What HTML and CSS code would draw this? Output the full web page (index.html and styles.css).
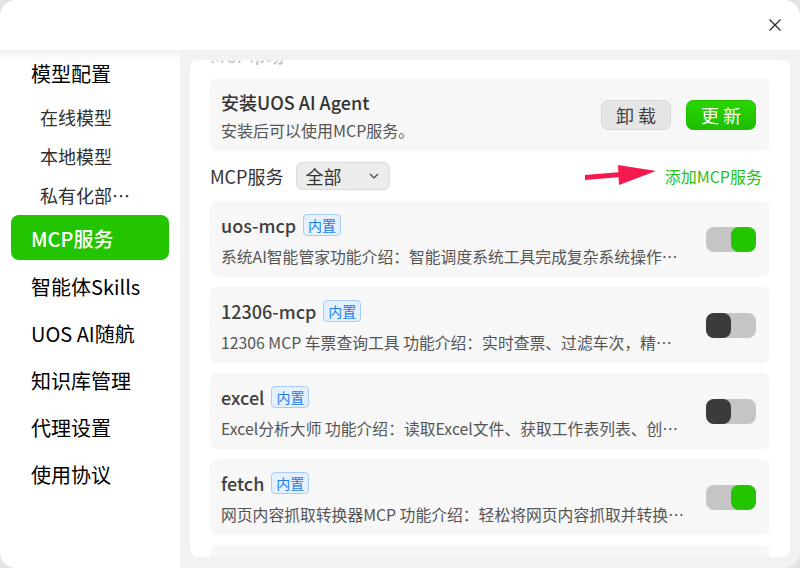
FILE: index.html
```html
<!DOCTYPE html>
<html lang="zh-CN">
<head>
<meta charset="utf-8">
<title>UOS AI 设置</title>
<link rel="stylesheet" href="styles.css">
</head>
<body>
<div class="window">
  <header class="titlebar">
    <button class="close" aria-label="关闭">
      <svg width="14" height="14" viewBox="0 0 14 14"><path d="M1.5 1.5 L12.5 12.5 M12.5 1.5 L1.5 12.5" stroke="#2b2b2b" stroke-width="1.3" fill="none"/></svg>
    </button>
  </header>
  <div class="main">
    <nav class="sidebar">
      <div class="nav-head">模型配置</div>
      <div class="nav-sub">在线模型</div>
      <div class="nav-sub">本地模型</div>
      <div class="nav-sub">私有化部…</div>
      <div class="nav-item active">MCP服务</div>
      <div class="nav-rest">
        <div class="nav-item">智能体Skills</div>
        <div class="nav-item">UOS AI随航</div>
        <div class="nav-item">知识库管理</div>
        <div class="nav-item">代理设置</div>
        <div class="nav-item">使用协议</div>
      </div>
    </nav>
    <div class="content-wrap">
      <section class="panel">
        <div class="scroll">
          <h3 class="section-title">MCP市场</h3>
          <div class="card agent">
            <div class="card-text">
              <div class="agent-title">安装UOS AI Agent</div>
              <div class="agent-sub">安装后可以使用MCP服务。</div>
            </div>
            <div class="agent-actions">
              <button class="btn btn-grey">卸 载</button>
              <button class="btn btn-green">更 新</button>
            </div>
          </div>
          <div class="mcp-bar">
            <span class="bar-label">MCP服务</span>
            <div class="select">
              <span>全部</span>
              <svg width="10" height="6" viewBox="0 0 10 6"><path d="M1 1 L5 5 L9 1" stroke="#444" stroke-width="1.2" fill="none"/></svg>
            </div>
            <span class="spacer"></span>
            <svg class="arrow" width="76" height="26" viewBox="0 0 76 26">
              <polygon points="2,13 38,10 38,15 2,18" fill="#f51a4e"/>
              <polygon points="35,3 73,9 36,23" fill="#f51a4e"/>
            </svg>
            <a class="add-link">添加MCP服务</a>
          </div>
          <div class="card mcp">
            <div class="card-text">
              <div class="mcp-title"><span>uos-mcp</span><span class="tag">内置</span></div>
              <div class="mcp-desc">系统AI智能管家功能介绍：智能调度系统工具完成复杂系统操作…</div>
            </div>
            <div class="toggle on"><span class="knob"></span></div>
          </div>
          <div class="card mcp">
            <div class="card-text">
              <div class="mcp-title"><span>12306-mcp</span><span class="tag">内置</span></div>
              <div class="mcp-desc">12306 MCP 车票查询工具 功能介绍：实时查票、过滤车次，精…</div>
            </div>
            <div class="toggle off"><span class="knob"></span></div>
          </div>
          <div class="card mcp">
            <div class="card-text">
              <div class="mcp-title"><span>excel</span><span class="tag">内置</span></div>
              <div class="mcp-desc">Excel分析大师 功能介绍：读取Excel文件、获取工作表列表、创…</div>
            </div>
            <div class="toggle off"><span class="knob"></span></div>
          </div>
          <div class="card mcp">
            <div class="card-text">
              <div class="mcp-title"><span>fetch</span><span class="tag">内置</span></div>
              <div class="mcp-desc">网页内容抓取转换器MCP 功能介绍：轻松将网页内容抓取并转换…</div>
            </div>
            <div class="toggle on"><span class="knob"></span></div>
          </div>
          <div class="card mcp"></div>
        </div>
      </section>
    </div>
  </div>
</div>
</body>
</html>
```

FILE: styles.css
```css
* { box-sizing: border-box; }

html, body {
  margin: 0;
  padding: 0;
  background: #e4e4e4;
}

body {
  font-family: "Noto Sans CJK SC", "Noto Sans", sans-serif;
  color: #333;
}

.window {
  width: 800px;
  height: 568px;
  border-radius: 16px;
  overflow: hidden;
  background: #f2f2f2;
  display: flex;
  flex-direction: column;
}

.titlebar {
  height: 50px;
  flex: none;
  background: #fff;
  display: flex;
  justify-content: flex-end;
  align-items: center;
  padding-right: 13px;
}

.close {
  width: 24px;
  height: 24px;
  border: 0;
  padding: 0;
  background: transparent;
  display: flex;
  align-items: center;
  justify-content: center;
}

.main {
  flex: 1;
  display: flex;
  min-height: 0;
}

/* sidebar */
.sidebar {
  width: 180px;
  flex: none;
  background: linear-gradient(#f2f2f2, #ffffff 12px);
  color: #000;
}

.nav-head {
  height: 48px;
  line-height: 48px;
  padding-left: 31px;
  font-size: 20px;
  font-weight: 400;
}

.nav-sub {
  height: 39px;
  line-height: 39px;
  padding-left: 40px;
  font-size: 18px;
  color: #303030;
}

.nav-item {
  height: 47px;
  line-height: 47px;
  padding-left: 31px;
  font-size: 20px;
  font-weight: 400;
}

.nav-item.active {
  margin: 0 11px;
  height: 45px;
  line-height: 47px;
  padding-left: 20px;
  border-radius: 8px;
  background: #23c400;
  color: #fff;
  font-weight: 500;
}

.nav-rest {
  padding-top: 3px;
}

/* content */
.content-wrap {
  flex: 1;
  display: flex;
  padding: 10px 10px 11px 10px;
  min-width: 0;
}

.panel {
  flex: 1;
  position: relative;
  background: #fff;
  border-radius: 8px;
  overflow: hidden;
  padding: 0 20px;
}

.panel::before {
  content: "";
  position: absolute;
  left: 0;
  right: 0;
  top: 0;
  height: 14px;
  background: linear-gradient(rgba(255, 255, 255, 0.85), rgba(255, 255, 255, 0));
  z-index: 1;
}

.scroll {
  margin-top: -16px;
}

.section-title {
  margin: 0 0 12px 0;
  font-size: 18px;
  line-height: 22px;
  font-weight: 500;
  color: #333;
}

.card {
  background: #f7f7f7;
  border-radius: 8px;
  display: flex;
  align-items: center;
}

.card-text {
  flex: 1;
  min-width: 0;
}

.agent {
  padding: 12px 14px 11px 11px;
}

.agent-title {
  font-size: 18px;
  line-height: 25px;
  font-weight: 500;
  color: #333;
}

.agent-sub {
  margin-top: 5px;
  font-size: 16px;
  line-height: 20px;
  color: #555;
}

.agent-actions {
  display: flex;
  gap: 15px;
}

.btn {
  width: 70px;
  height: 30px;
  border-radius: 7px;
  font-family: inherit;
  font-size: 18px;
  line-height: 28px;
  padding: 0;
}

.btn-grey {
  background: #e6e6e6;
  border: 1px solid #d6d6d6;
  color: #404040;
}

.btn-green {
  background: linear-gradient(#2ad600, #1fbd00);
  border: 1px solid #22c000;
  color: #fff;
}

.mcp-bar {
  height: 28px;
  margin: 11px 8px 11px 0;
  display: flex;
  align-items: center;
}

.bar-label {
  font-size: 18px;
  color: #333;
}

.select {
  margin-left: 12px;
  width: 94px;
  height: 28px;
  border-radius: 6px;
  background: #ececec;
  border: 1px solid #dcdcdc;
  display: flex;
  align-items: center;
  justify-content: space-between;
  padding: 0 10px 0 9px;
  font-size: 18px;
  color: #333;
}

.spacer {
  flex: 1;
}

.arrow {
  display: block;
  margin-right: 6px;
  margin-top: -3px;
}

.add-link {
  font-size: 16px;
  color: #27c014;
}

.mcp {
  height: 76px;
  margin-bottom: 10px;
  padding: 11px 14px 10px 11px;
}

.mcp-title {
  height: 26px;
  display: flex;
  align-items: center;
  font-size: 18px;
  font-weight: 500;
  color: #404040;
}

.tag {
  margin-left: 7px;
  height: 22px;
  line-height: 20px;
  padding: 0 4px;
  border: 1px solid #a7cdf6;
  background: #e4f0fd;
  border-radius: 4px;
  color: #1b7de8;
  font-size: 14px;
  font-weight: 400;
}

.mcp-desc {
  margin-top: 9px;
  font-size: 15.8px;
  line-height: 20px;
  color: #555;
  white-space: nowrap;
}

.toggle {
  width: 50px;
  height: 25px;
  flex: none;
  margin-left: 14px;
  border-radius: 8px;
  background: #c5c5c5;
  display: flex;
}

.toggle.on {
  justify-content: flex-end;
}

.knob {
  width: 25px;
  height: 25px;
  border-radius: 8px;
}

.toggle.on .knob {
  background: #22c500;
}

.toggle.off .knob {
  background: #3b3b3b;
}
```
